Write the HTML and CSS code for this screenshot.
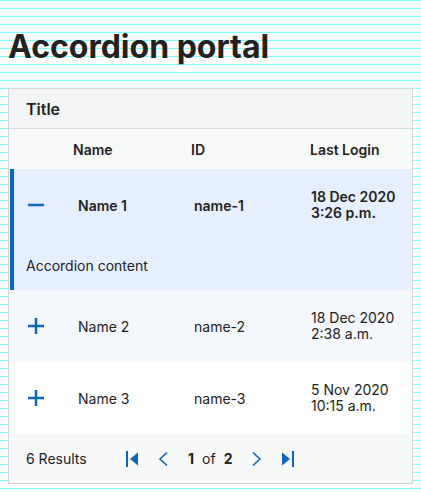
FILE: index.html
```html
<!DOCTYPE html>
<html lang="en">
<head>
<meta charset="utf-8">
<title>Accordion portal</title>
<link rel="stylesheet" href="styles.css">
</head>
<body>
<h1 class="page-title">Accordion portal</h1>
<section class="card">
  <header class="card-title">Title</header>
  <div class="thead">
    <span></span><span>Name</span><span>ID</span><span>Last Login</span>
  </div>
  <div class="item item--open">
    <div class="row row--bold">
      <span class="toggle"><svg width="16" height="16" viewBox="0 0 16 16"><rect x="0" y="6.75" width="16" height="2.5"/></svg></span>
      <span>Name 1</span>
      <span>name-1</span>
      <span class="date">18 Dec 2020<br>3:26 p.m.</span>
    </div>
    <div class="panel">Accordion content</div>
  </div>
  <div class="item item--alt">
    <div class="row">
      <span class="toggle"><svg width="16" height="16" viewBox="0 0 16 16"><rect x="0" y="6.75" width="16" height="2.5"/><rect x="6.75" y="0" width="2.5" height="16"/></svg></span>
      <span>Name 2</span>
      <span>name-2</span>
      <span class="date">18 Dec 2020<br>2:38 a.m.</span>
    </div>
  </div>
  <div class="item">
    <div class="row">
      <span class="toggle"><svg width="16" height="16" viewBox="0 0 16 16"><rect x="0" y="6.75" width="16" height="2.5"/><rect x="6.75" y="0" width="2.5" height="16"/></svg></span>
      <span>Name 3</span>
      <span>name-3</span>
      <span class="date">5 Nov 2020<br>10:15 a.m.</span>
    </div>
  </div>
  <footer class="pager">
    <span class="results">6 Results</span>
    <nav class="pages">
      <svg class="pg-icon" width="16" height="16" viewBox="0 0 16 16"><rect x="2" y="0" width="2" height="16"/><path d="M14 1.5V14.5L6 8Z"/></svg>
      <svg class="pg-icon" width="16" height="16" viewBox="0 0 16 16"><path class="chev" d="M11 1.5L4 8L11 14.5"/></svg>
      <span class="count"><b>1</b><span>of</span><b>2</b></span>
      <svg class="pg-icon" width="16" height="16" viewBox="0 0 16 16"><path class="chev" d="M5 1.5L12 8L5 14.5"/></svg>
      <svg class="pg-icon" width="16" height="16" viewBox="0 0 16 16"><path d="M2 1.5V14.5L10 8Z"/><rect x="12" y="0" width="2" height="16"/></svg>
    </nav>
  </footer>
</section>
</body>
</html>
```
FILE: styles.css
```css
html, body {
  height: 100%;
}
body {
  margin: 0;
  padding: 27px 8px 0;
  box-sizing: border-box;
  font-family: Inter, "Noto Sans", sans-serif;
  font-size: 14px;
  color: #222;
  background: #fff repeating-linear-gradient(to bottom, #80ffff 0 1px, transparent 1px 8px);
}
.page-title {
  margin: 0 0 22px;
  font-size: 32px;
  line-height: 39px;
  font-weight: 700;
  color: #212121;
}
.card {
  border: 1px solid #d4d6d6;
  background: #fff;
}
.card-title {
  height: 39px;
  display: flex;
  align-items: center;
  padding-left: 17px;
  background: #f3f4f5;
  border-bottom: 1px solid #d8dada;
  font-size: 16px;
  font-weight: 600;
}
.thead {
  height: 40px;
  display: grid;
  grid-template-columns: 64px 118px 119px 1fr;
  align-items: center;
  background: #f8f9f9;
  font-weight: 600;
}
.item--alt {
  background: #f4f7fb;
}
.item--open {
  margin-left: 1px;
  border-left: 4px solid #0b65c2;
  background: #e5effe;
}
.row {
  height: 72px;
  display: grid;
  grid-template-columns: 69px 116px 117px 1fr;
  align-items: center;
}
.item--open .row {
  grid-template-columns: 64px 116px 117px 1fr;
}
.row--bold {
  font-weight: 600;
}
.toggle {
  display: flex;
  padding-left: 19px;
  fill: #0b65c2;
}
.item--open .toggle {
  padding-left: 14px;
}
.date {
  line-height: 16px;
}
.panel {
  height: 49px;
  display: flex;
  align-items: center;
  padding-left: 12px;
}
.pager {
  height: 49px;
  display: flex;
  align-items: center;
  padding-left: 17px;
  background: #f7f8f8;
}
.results {
  width: 98px;
}
.pages {
  display: flex;
  align-items: center;
  gap: 16px;
}
.pg-icon {
  fill: #0b65c2;
}
.chev {
  fill: none;
  stroke: #0b65c2;
  stroke-width: 1.6;
}
.count {
  display: flex;
  gap: 8px;
}
.count b {
  font-weight: 700;
}
```
